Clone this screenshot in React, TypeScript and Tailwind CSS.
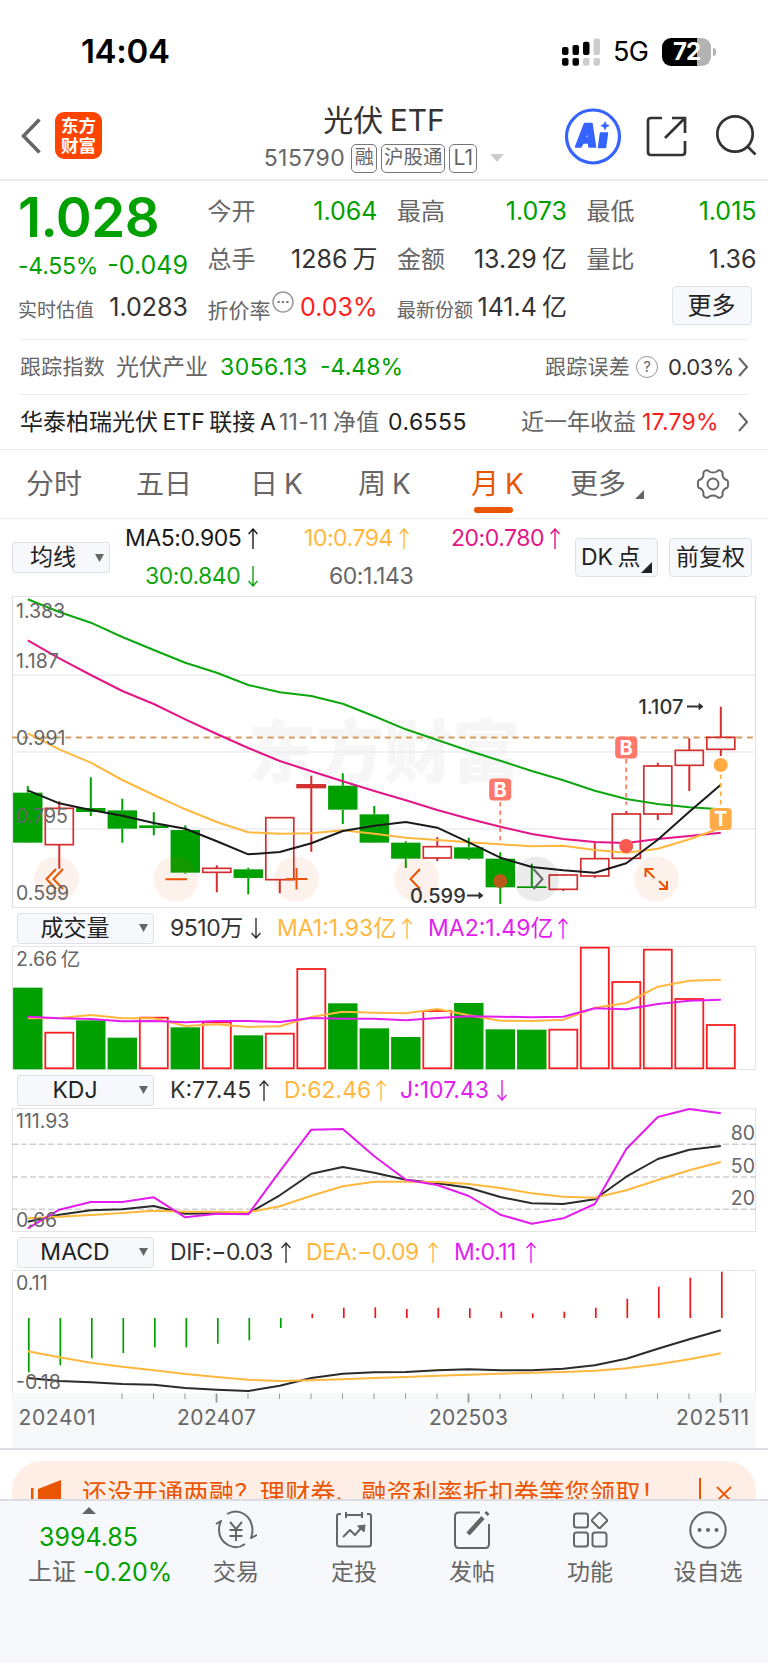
import type { ReactNode } from 'react';
import { clsx } from 'clsx';

const GREEN = '#00a000';
const RED = '#d32f2f';
const AMBER = '#ffb83d';
const MAGENTA = '#e41cf0';

// All series are stored in thirds of a pixel, one value per month
const cx = (i: number) => 27.8 + i * 31.5;

type Bar = [up: boolean, high: number, top: number, bottom: number, low: number];

const candles: Bar[] = [
  [false, 318, 338, 488, 489],
  [true, 364, 385, 494, 566],
  [false, 292, 384, 396, 408],
  [false, 356, 391, 446, 488],
  [false, 397, 436, 444, 466],
  [false, 436, 450, 578, 581],
  [true, 556, 565, 577, 637],
  [false, 563, 568, 594, 643],
  [true, 412, 413, 599, 640],
  [true, 287, 315, 322, 515],
  [false, 280, 317, 389, 432],
  [false, 378, 403, 488, 489],
  [false, 484, 488, 536, 564],
  [true, 471, 500, 534, 543],
  [false, 473, 502, 536, 540],
  [false, 517, 536, 622, 672],
  [false, 551, 619, 624, 624],
  [true, 583, 585, 628, 633],
  [true, 487, 536, 588, 594],
  [true, 393, 402, 535, 536],
  [true, 248, 258, 402, 420],
  [true, 175, 211, 256, 333],
  [true, 80, 172, 208, 228],
];

const ma5 = [331, 370, 390, 407, 429, 446, 484, 523, 516, 490, 453, 437, 426, 443, 487, 533, 561, 571, 578, 550, 479, 395, 314];
const ma10 = [160, 208, 248, 300, 345, 388, 426, 457, 461, 460, 451, 461, 473, 480, 487, 493, 499, 497, 510, 518, 506, 478, 444];
const ma20 = [-119, -65, -15, 33, 72, 118, 162, 204, 243, 274, 304, 333, 361, 390, 416, 440, 462, 477, 486, 489, 477, 468, 458];
const ma30 = [-242, -204, -172, -129, -90, -52, -22, 15, 37, 48, 71, 109, 148, 180, 212, 242, 273, 301, 332, 357, 372, 382, 388];

const volume = [144, 279, 242, 294, 234, 263, 248, 287, 282, 88, 191, 266, 292, 214, 190, 269, 270, 270, 24, 127, 30, 178, 256];
const volumeUp = [1, 4, 6, 8, 9, 13, 17, 18, 19, 20, 21, 22];
const vol1 = [236, 235, 226, 236, 236, 259, 254, 262, 260, 232, 216, 219, 221, 208, 227, 243, 244, 240, 204, 190, 141, 123, 120];
const vol2 = [231, 236, 238, 245, 244, 248, 244, 244, 247, 235, 237, 237, 242, 235, 230, 231, 233, 231, 206, 209, 193, 183, 180];

const kLine = [846, 825, 812, 809, 799, 822, 821, 821, 767, 702, 682, 699, 720, 731, 744, 772, 791, 793, 779, 711, 658, 630, 619];
const dLine = [836, 831, 826, 820, 813, 816, 816, 818, 800, 768, 740, 726, 726, 727, 733, 745, 761, 771, 774, 752, 721, 692, 667];
const jLine = [866, 810, 787, 787, 773, 833, 822, 824, 695, 570, 568, 650, 720, 736, 769, 825, 852, 836, 793, 628, 532, 508, 521];

const macd = [413, 392, 371, 355, 338, 338, 327, 317, 280, 237, 219, 218, 223, 219, 221, 231, 236, 231, 219, 192, 156, 129, 111];
const dif = [430, 439, 443, 448, 450, 460, 465, 469, 453, 430, 417, 413, 412, 407, 404, 407, 407, 402, 392, 372, 342, 314, 287];
const dea = [350, 368, 384, 396, 407, 418, 427, 435, 439, 437, 434, 430, 427, 423, 420, 417, 414, 412, 408, 401, 389, 374, 356];

function Line({ data, offset, color }: { data: number[]; offset: number; color: string }) {
  const points = data.map((v, i) => `${cx(i).toFixed(1)},${((v + offset) / 3).toFixed(1)}`).join(' ');
  return <polyline points={points} fill="none" stroke={color} strokeWidth={2} strokeLinejoin="round" />;
}

function Arrow({ down }: { down?: boolean }) {
  return (
    <svg width="10" height="21" viewBox="0 0 10 21" className={clsx('shrink-0', down && 'rotate-180')} fill="none" stroke="currentColor" strokeWidth="1.4">
      <path d="M5 21V1M0.6 6 5 1l4.4 5" />
    </svg>
  );
}

function Chevron() {
  return (
    <svg width="10" height="20" viewBox="0 0 10 20" fill="none" stroke="#666" strokeWidth="2">
      <path d="M1 1l8 9-8 9" />
    </svg>
  );
}

function Caret() {
  return (
    <svg width="9" height="8" viewBox="0 0 9 8" fill="#666">
      <path d="M0 0h9L4.5 8z" />
    </svg>
  );
}

function Quote({ label, value, className, small }: { label: ReactNode; value: string; className?: string; small?: boolean }) {
  return (
    <div className="flex h-12 items-center justify-between whitespace-nowrap">
      <span className={clsx('flex text-[#666]', small ? 'pt-1.5 text-[19px]' : 'text-2xl')}>{label}</span>
      <span className={clsx('text-[25px]', className)}>{value}</span>
    </div>
  );
}

function IndicatorBar({ name, items }: { name: string; items: { text: string; down?: boolean; className: string }[] }) {
  return (
    <div className="flex h-[38px] items-center pt-0.5 pl-[17px] text-[23px] whitespace-nowrap">
      <div className="flex h-[31px] w-[137px] shrink-0 items-center justify-between rounded-[3px] border border-[#dfe1e6] bg-[#f7f8fb] pr-[5px] text-[#222]">
        <span className="w-[114px] text-center">{name}</span>
        <Caret />
      </div>
      <div className="w-4" />
      {items.map((item) => (
        <div key={item.text} className={clsx('flex shrink-0 items-center justify-between', item.className)}>
          {item.text}
          <Arrow down={item.down} />
        </div>
      ))}
    </div>
  );
}

function Candle({ bar, i }: { bar: Bar; i: number }) {
  const [up, high, top, bottom, low] = bar;
  const y = (v: number) => (v + 252) / 3;
  const x = cx(i);
  const color = up ? RED : GREEN;
  return (
    <g stroke={color} strokeWidth={2}>
      <path d={`M${x} ${y(high)}V${y(top)}M${x} ${y(bottom)}V${y(low)}`} />
      {up ? (
        <rect x={x - 14} y={y(top)} width={28} height={y(bottom) - y(top)} fill="none" strokeWidth={1.7} />
      ) : (
        <rect x={x - 14.7} y={y(top)} width={29.4} height={y(bottom) - y(top)} fill={color} stroke="none" />
      )}
    </g>
  );
}

function Marker({ x, y, letter, color }: { x: number; y: number; letter: string; color: string }) {
  return (
    <g>
      <rect x={x - 11} y={y - 11} width="22" height="22" rx="4" fill={color} />
      <text x={x} y={y + 7} textAnchor="middle" fontSize="20" fontWeight="700" fill="#fff">{letter}</text>
    </g>
  );
}

function PriceChart() {
  return (
    <svg width="768" height="312" viewBox="0 0 768 312" className="block">
      <text x="248" y="181" fontSize="68" fontWeight="900" fill="#f6f6f6">东方财富</text>
      <path d="M12 79.2H756M12 156H756M12 233H756" stroke="#eaedf3" strokeWidth="1.6" />
      <rect x="12.5" y="0.5" width="743" height="311" fill="none" stroke="#dfe1e5" />
      <path d="M12 141.5H753" stroke="#d29b60" strokeWidth="2" strokeDasharray="6 4.65" />
      {candles.map((bar, i) => (
        <Candle key={i} bar={bar} i={i} />
      ))}
      <path d="M296.500 190.200h29.500" stroke={RED} strokeWidth="4" />
      <Line data={ma30} offset={252} color="#0ea60e" />
      <Line data={ma20} offset={252} color="#e31587" />
      <Line data={ma10} offset={252} color={AMBER} />
      <Line data={ma5} offset={252} color="#1a1a1a" />

      <g fill="#ea5504" fillOpacity="0.08">
        <circle cx="56.5" cy="283" r="22.5" />
        <circle cx="176" cy="283" r="22.5" />
        <circle cx="296.5" cy="283" r="22.5" />
        <circle cx="416.5" cy="283" r="22.5" />
        <circle cx="656.5" cy="283" r="22.5" />
        <circle cx="536.5" cy="283" r="22.5" fill="#000" />
      </g>
      <g fill="none" stroke="#ea5504" strokeWidth="2">
        <path d="M56 273 46.500 283l9.500 10M63 273l-9.500 10 9.500 10M165.500 283.300h21.500M286 283h21.500M296.500 272v21.500M420 273l-9.500 10 9.500 10" />
        <path d="M645.500 281V273h8M646 273.500l8.500 8.500M659 285l8 8M659 293h8V285" />
        <path d="M533.500 273l9 10-9 10" stroke="#666" />
      </g>

      <g fontSize="19.500" fill="#666">
        <text x="16" y="21.500">1.383</text>
        <text x="16" y="72">1.187</text>
        <text x="16" y="149">0.991</text>
        <text x="16" y="227">0.795</text>
        <text x="16" y="304">0.599</text>
      </g>
      <g fontSize="20" fontWeight="500" fill="#333">
        <text x="638.500" y="117.500">1.107</text>
        <text x="410" y="306.500">0.599</text>
      </g>
      <g stroke="#333" strokeWidth="2" fill="#333">
        <path d="M687 110.500h12M467 299.500h12" />
        <path d="M699 107.500l4 3-4 3zM479 296.500l4 3-4 3z" strokeWidth="1" />
      </g>

      <g stroke="#ff7560" strokeWidth="1.700" strokeDasharray="4.500 4">
        <path d="M500.200 206v43M626.200 163v46" />
        <path d="M720.700 170v42" stroke="#ffab40" />
      </g>
      <circle cx="500.200" cy="285" r="7" fill="#b95a1b" />
      <circle cx="626.200" cy="250" r="7" fill="#f85a50" />
      <circle cx="720.700" cy="169" r="7" fill="#ffab40" />
      <Marker x={500.2} y={193.5} letter="B" color="#ff7869" />
      <Marker x={626.2} y={151.5} letter="B" color="#ff7869" />
      <Marker x={720.7} y={223} letter="T" color="#ffab47" />
    </svg>
  );
}

function VolumeChart() {
  return (
    <svg width="768" height="124" viewBox="0 0 768 124" className="block">
      <rect x="12.5" y="0.5" width="743" height="123" fill="none" stroke="#e3e5e9" />
      {volume.map((v, i) => {
        const y = (v - 19) / 3;
        return volumeUp.includes(i) ? (
          <rect key={i} x={cx(i) - 14} y={y} width="28" height={122.3 - y} fill="none" stroke="#fa1e1e" strokeWidth="1.8" />
        ) : (
          <rect key={i} x={cx(i) - 14.7} y={y} width="29.4" height={123.3 - y} fill={GREEN} />
        );
      })}
      <Line data={vol1} offset={-19} color={AMBER} />
      <Line data={vol2} offset={-19} color={MAGENTA} />
      <text x="16" y="20" fontSize="19.5" fill="#666">2.66 亿</text>
    </svg>
  );
}

function KdjChart() {
  return (
    <svg width="768" height="124" viewBox="0 0 768 124" className="block">
      <rect x="12.5" y="0.5" width="743" height="123" fill="none" stroke="#e3e5e9" />
      <path d="M12 36.300H756M12 69H756M12 101.300H756" stroke="#d0d0d0" strokeWidth="1.600" strokeDasharray="6 3" />
      <Line data={kLine} offset={-505} color="#2b2b2b" />
      <Line data={dLine} offset={-505} color={AMBER} />
      <Line data={jLine} offset={-505} color={MAGENTA} />
      <g fontSize="19.500" fill="#666">
        <text x="16" y="20">111.93</text>
        <text x="16" y="119">0.66</text>
        <text x="755" y="32" textAnchor="end">80</text>
        <text x="755" y="64.500" textAnchor="end">50</text>
        <text x="755" y="97" textAnchor="end">20</text>
      </g>
    </svg>
  );
}

function MacdChart() {
  return (
    <svg width="768" height="178" viewBox="0 0 768 178" className="block">
      <rect x="12" y="123.5" width="744" height="54.5" fill="#f7f8fa" />
      <path d="M12.500 123.500V.5H755.500V123.500" fill="none" stroke="#e3e5e9" />
      {macd.map((v, i) => (
        <path key={i} d={`M${cx(i) + 1} 48V${(v - 106) / 3}`} stroke={i < 9 ? GREEN : '#f01414'} strokeWidth="1.7" />
      ))}
      <Line data={dif} offset={-106} color="#2b2b2b" />
      <Line data={dea} offset={-106} color={AMBER} />
      {macd.map((_, i) => {
        if (i < 3) return null;
        const major = i % 8 === 6;
        return <path key={i} d={`M${cx(i) - 0.3} 123.500v${major ? 9 : 5.5}`} stroke="#999" strokeWidth={major ? 1.8 : 1} />;
      })}
      <g fontSize="19.500" fill="#666">
        <text x="16" y="20">0.11</text>
        <text x="16" y="118.500">-0.18</text>
      </g>
      <g fontSize="21" fill="#666">
        <text x="18.500" y="154.500" textLength="77">202401</text>
        <text x="177" y="154.500" textLength="79">202407</text>
        <text x="429" y="154.500" textLength="79">202503</text>
        <text x="676" y="154.500" textLength="73">202511</text>
      </g>
    </svg>
  );
}

function StatusBar() {
  return (
    <div className="flex h-[100px] items-center justify-between pt-[3px] pr-[52px] pl-[81px]">
      <span className="text-[33px] font-semibold tracking-[-0.01em]">14:04</span>
      <div className="flex items-center">
        <svg width="39" height="28" viewBox="0 0 39 28">
          <rect x="0" y="9" width="6.500" height="8" rx="2" />
          <rect x="10.500" y="7" width="6.500" height="10" rx="2" />
          <rect x="21" y="3.700" width="6.500" height="13.300" rx="2" />
          <rect x="31.500" y="0.500" width="6.500" height="16.500" rx="2" fill="#ccc" />
          <rect x="0" y="20" width="6.500" height="7.700" rx="2" />
          <rect x="10.500" y="20" width="6.500" height="7.700" rx="2" />
          <rect x="21" y="20" width="6.500" height="7.700" rx="2" fill="#ccc" />
          <rect x="31.500" y="20" width="6.500" height="7.700" rx="2" fill="#ccc" />
        </svg>
        <span className="ml-3 w-[37px] pt-0.5 text-[27px] tracking-[-0.02em]">5G</span>
        <div className="ml-3 flex h-7 w-[49px] items-center justify-center rounded-[9px] bg-linear-to-r from-black from-[72%] to-[#b3b3b3] to-[72%] text-2xl font-bold tracking-[-0.04em] text-white">
          72
        </div>
        <div className="ml-0.5 h-2 w-[3px] rounded-r-full bg-[#b3b3b3]" />
      </div>
    </div>
  );
}

function TopBar() {
  return (
    <div className="flex h-[81px] border-b-2 border-[#ebebeb]">
      <div className="flex w-[246px] items-start pl-[21px]">
        <svg width="20" height="36" viewBox="0 0 20 36" className="mt-[18px]" fill="none" stroke="#666" strokeWidth="3.5">
          <path d="M18.500 1.500 2.500 18l16 16.500" />
        </svg>
        <div className="mt-3 ml-[14px] flex h-[47px] w-[47px] flex-col items-center justify-center rounded-[9px] bg-[#ff4400] text-[17.5px] leading-[20px] font-bold text-white">
          <span>东方</span>
          <span>财富</span>
        </div>
      </div>
      <div className="flex w-[276px] flex-col items-center whitespace-nowrap">
        <div className="h-[43px] text-[30px] leading-[40px] text-[#333]">光伏 ETF</div>
        <div className="flex h-[30px] items-center text-[#666]">
          <span className="mr-1.5 text-[23px] tracking-[0.02em]">515790</span>
          <span className="mr-1 flex h-[29px] w-[26px] items-center justify-center rounded-[5px] border border-[#777] text-[19px]">融</span>
          <span className="mr-1 flex h-[29px] w-16 items-center justify-center rounded-[5px] border border-[#777] text-[19.5px]">沪股通</span>
          <span className="mr-[13px] flex h-[29px] w-7 items-center justify-center rounded-[5px] border border-[#777] text-[21px]">L1</span>
          <svg width="14" height="8" viewBox="0 0 14 8" fill="#ccc">
            <path d="M0 0h14L7 8z" />
          </svg>
        </div>
      </div>
      <div className="flex flex-1 items-start pt-2 pl-[42px]">
        <svg width="58" height="58" viewBox="0 0 58 58" className="shrink-0">
          <circle cx="29" cy="28.500" r="26.500" fill="none" stroke="#3563ff" strokeWidth="3.200" />
          <path fillRule="evenodd" fill="#3563ff" stroke="#3563ff" strokeWidth="1.500" strokeLinejoin="round" d="M20.500 15.500h7.500l3.500 23.500h-6.500l-.5-4h-5.500l-2 4h-5.500zM23.800 23l-2.500 7h3zM36.500 25h7l-2 14.500h-7z" />
          <path fill="#3563ff" d="M41 13l1.500 3.300 3.300 1.500-3.300 1.500L41 22.500l-1.500-3.200-3.300-1.500 3.300-1.500z" />
        </svg>
        <svg width="42" height="42" viewBox="0 0 42 42" className="mt-2 ml-6 shrink-0" fill="none" stroke="#333" strokeWidth="2.700">
          <path d="M16 2H5Q2 2 2 5v31q0 3 3 3h31q3 0 3-3V25M26 2h13v15M19 22 39 2" />
        </svg>
        <svg width="42" height="42" viewBox="0 0 42 42" className="mt-[6px] ml-[27px] shrink-0" fill="none" stroke="#333" strokeWidth="2.700">
          <circle cx="20" cy="20" r="17.700" />
          <path d="M32 32l8.500 8.500" />
        </svg>
      </div>
    </div>
  );
}

function Quotes() {
  return (
    <div className="grid h-[158px] grid-cols-[170px_170px_170px_170px] gap-x-[19.500px] pt-[7px] pl-[18px]">
      <div className="whitespace-nowrap text-[#00a000]">
        <div className="h-[56px] text-[54.5px] leading-[58px] font-semibold tracking-[-0.01em]">1.028</div>
        <div className="flex h-[40px] items-center justify-between pt-1">
          <span className="text-[23px] tracking-[-0.01em]">-4.55%</span>
          <span className="text-[25px]">-0.049</span>
        </div>
        <Quote label="实时估值" value="1.0283" small className="text-[#333]" />
      </div>
      <div>
        <Quote label="今开" value="1.064" className="text-[#00a000]" />
        <Quote label="总手" value="1286 万" className="text-[#333]" />
        <Quote
          small
          label={
            <>
              <span className="text-[21px]">折价率</span>
              <svg width="22" height="22" viewBox="0 0 22 22" className="-mt-1 ml-px" fill="none" stroke="#999" strokeWidth="1.500">
                <circle cx="11" cy="11" r="10" />
                <path d="M5.500 11h2.200M9.900 11h2.200M14.300 11h2.200" stroke="#777" strokeWidth="2" />
              </svg>
            </>
          }
          value="0.03%"
          className="text-[#fa1e1e]"
        />
      </div>
      <div>
        <Quote label="最高" value="1.073" className="text-[#00a000]" />
        <Quote label="金额" value="13.29 亿" className="text-[#333]" />
        <Quote label="最新份额" value="141.4 亿" small className="text-[#333]" />
      </div>
      <div>
        <Quote label="最低" value="1.015" className="text-[#00a000]" />
        <Quote label="量比" value="1.36" className="text-[#333]" />
        <div className="mt-0.5 mr-[5px] ml-auto flex h-[39px] w-20 items-center justify-center rounded-[4px] border border-[#dfe1e6] bg-[#f7f8fb] text-2xl text-[#222]">
          更多
        </div>
      </div>
    </div>
  );
}

function InfoRows() {
  return (
    <div className="border-b border-[#ebebeb] text-[23px] whitespace-nowrap">
      <div className="mx-5 flex h-[55px] items-center border-t border-[#ebebeb] text-[#666]">
        <span className="w-24 text-[21px] tracking-[0.01em]">跟踪指数</span>
        <span className="w-26">光伏产业</span>
        <span className="w-[100px] tracking-[0.02em] text-[#00a000]">3056.13</span>
        <span className="text-[#00a000]">-4.48%</span>
        <span className="ml-auto w-[91px] text-[21px] tracking-[0.01em]">跟踪误差</span>
        <span className="flex h-[22px] w-[22px] items-center justify-center rounded-full border border-[#999] text-[15px]">?</span>
        <span className="ml-[10px] w-[70px] text-[22px] tracking-[-0.02em] text-[#333]">0.03%</span>
        <Chevron />
      </div>
      <div className="mx-5 flex h-[55px] items-center border-t border-[#ebebeb] text-[#666]">
        <span className="w-[259px] text-[#222]">华泰柏瑞光伏 ETF 联接 A</span>
        <span className="w-[109px] tracking-[0.01em]">11-11 净值</span>
        <span className="tracking-[0.02em] text-[#222]">0.6555</span>
        <span className="ml-auto w-[121px]">近一年收益</span>
        <span className="w-[96px] tracking-[0.01em] text-[#fa1e1e]">17.79%</span>
        <Chevron />
      </div>
    </div>
  );
}

const tabs = [
  { name: '分时', className: 'w-[110px]' },
  { name: '五日', className: 'w-[114px]' },
  { name: '日 K', className: 'w-[108px]' },
  { name: '周 K', className: 'w-[113px]' },
  { name: '月 K', className: 'w-[99px] text-[#ea5504]' },
  { name: '更多', className: 'w-[65px]' },
];

function Tabs() {
  return (
    <div className="flex h-[69px] items-center border-b border-[#ededed] pl-[26px] text-[28px] whitespace-nowrap text-[#666]">
      {tabs.map((tab) => (
        <div key={tab.name} className={clsx('relative', tab.className)}>
          {tab.name}
          {tab.name === '月 K' && <div className="absolute top-[44px] left-[3px] h-1.5 w-[39px] rounded-full bg-[#ea5504]" />}
        </div>
      ))}
      <svg width="9" height="9" viewBox="0 0 9 9" className="mt-5" fill="#666">
        <path d="M9 0v9H0z" />
      </svg>
      <svg width="34" height="34" viewBox="0 0 34 34" className="ml-[52px]" fill="none" stroke="#666" strokeWidth="1.900" strokeLinejoin="round">
        <path d="M9.500 3.500Q12 2.500 13 4.500Q17 6.500 21 4.500Q22 2.500 24.500 3.500Q27.500 5 26.500 8Q27.500 12.500 31 13Q32.500 14 32 17Q32.500 20 31 21Q27.500 21.500 26.500 26Q27.500 29 24.500 30.500Q22 31.500 21 29.500Q17 27.500 13 29.500Q12 31.500 9.500 30.500Q6.500 29 7.500 26Q6.500 21.500 3 21Q1.500 20 2 17Q1.500 14 3 13Q6.500 12.500 7.500 8Q6.500 5 9.500 3.500Z" />
        <circle cx="17" cy="17" r="5.500" />
      </svg>
    </div>
  );
}

function MaLegend() {
  return (
    <div className="flex h-[77px] text-[23px] whitespace-nowrap">
      <div className="mt-[23px] ml-3 flex h-[31px] w-[98px] items-center justify-between rounded-[3px] border border-[#dfe1e6] bg-[#f7f8fb] pr-[5px] pl-[17px] text-[#222]">
        均线
        <Caret />
      </div>
      <div className="w-[465px] tracking-[-0.02em]">
        <div className="flex h-[39px] items-center">
          <div className="ml-[15px] flex w-[133px] items-center justify-between text-[#1a1a1a]">MA5:0.905<Arrow /></div>
          <div className="ml-[46px] flex w-[105px] items-center justify-between text-[#ffb83d]">10:0.794<Arrow /></div>
          <div className="ml-[42px] flex w-[109px] items-center justify-between text-[#e31587]">20:0.780<Arrow /></div>
        </div>
        <div className="flex h-[37px] items-center">
          <div className="ml-[35px] flex w-[113px] items-center justify-between text-[#0ea60e]">30:0.840<Arrow down /></div>
          <div className="ml-[71px] text-[#666]">60:1.143</div>
        </div>
      </div>
      <div className="relative mt-[19px] flex h-[39px] w-[83px] items-center rounded-[4px] border border-[#dfe1e6] bg-[#f7f8fb] pl-[5px] text-[#222]">
        DK 点
        <svg width="11" height="11" viewBox="0 0 11 11" className="absolute right-[5px] bottom-[3px]" fill="#222">
          <path d="M11 0v11H0z" />
        </svg>
      </div>
      <div className="mt-[19px] ml-[11px] flex h-[39px] w-[83px] items-center justify-center rounded-[4px] border border-[#dfe1e6] bg-[#f7f8fb] text-[#222]">
        前复权
      </div>
    </div>
  );
}

function Banner() {
  return (
    <div className="h-[51px] overflow-hidden border-t-2 border-[#dcdde2] px-3 pt-[11px]">
      <div className="flex h-[65px] items-center rounded-[30px] bg-[#feeee5] pl-[19px] whitespace-nowrap text-[#ea5504]">
        <svg width="31" height="28" viewBox="0 0 31 28" className="shrink-0" fill="currentColor">
          <path d="M0 8h2.500v18H0zM7 9 30 0v28L7 24z" />
        </svg>
        <span className="ml-5 w-[617px] shrink-0 text-[25px] tracking-[0.4px]">还没开通两融？理财券、融资利率折扣券等您领取！</span>
        <div className="h-[31px] w-0.5 shrink-0 bg-current" />
        <svg width="16" height="16" viewBox="0 0 16 16" className="ml-[15px] shrink-0" fill="none" stroke="currentColor" strokeWidth="1.800">
          <path d="M1 1l14 14M15 1 1 15" />
        </svg>
      </div>
    </div>
  );
}

const actions: { name: string; icon: ReactNode }[] = [
  {
    name: '交易',
    icon: (
      <>
        <path d="M12 4Q21 -1 29 4Q37 9 37.500 20Q37.500 24 36 28l6-3M30 34Q22 40 13 35Q4 30 4 20Q4 15 6 11l-5 3" />
        <path d="M15 12l6 7 6-7M21 19v12M14.500 20h13M14.500 26h13" />
      </>
    ),
  },
  {
    name: '定投',
    icon: (
      <>
        <path d="M8 4H6Q4 4 4 6v28q0 2.500 2.500 2.500h29Q38 36.500 38 34V6q0-2-2-2h-2M13 5h16M13 2v6M29 2v6" />
        <path d="M10 27l7-7 5 5 7-8" />
        <path d="M24.500 16l7.500-1-1 7z" fill="#666" strokeWidth="1" />
      </>
    ),
  },
  {
    name: '发帖',
    icon: (
      <>
        <path d="M29 2.500H8q-4 0-4 4V34q0 4 4 4h26q4 0 4-4V14" />
        <path d="M17 24 32 7.500M35 4.500l2-2" strokeWidth="4.500" />
      </>
    ),
  },
  {
    name: '功能',
    icon: (
      <>
        <rect x="5" y="3.500" width="14" height="14" rx="2.500" />
        <rect x="5" y="22.500" width="14" height="14" rx="2.500" />
        <rect x="23.500" y="22.500" width="14" height="14" rx="2.500" />
        <rect x="24.700" y="4.700" width="11.500" height="11.500" rx="1.500" transform="rotate(45 30.500 10.500)" />
      </>
    ),
  },
  {
    name: '设自选',
    icon: (
      <>
        <circle cx="21" cy="20" r="17.700" />
        <path d="M12.500 20h.1M21 20h.1M29.500 20h.1" strokeWidth="4" strokeLinecap="round" />
      </>
    ),
  },
];

function BottomBar() {
  return (
    <div className="flex h-[164px] border-t-2 border-[#dcdde2] bg-[#f7f8fb] text-[#666]">
      <div className="flex w-[177px] flex-col items-center whitespace-nowrap">
        <svg width="14" height="7" viewBox="0 0 14 7" className="mt-1.5" fill="#666">
          <path d="M0 7h14L7 0z" />
        </svg>
        <div className="mt-[5px] h-9 text-[25px] leading-9 text-[#00a000]">3994.85</div>
        <div className="flex w-[143px] items-center justify-between self-start pl-7 text-2xl leading-[34px]">
          上证<span className="ml-[7px] text-[25px] text-[#00a000]">-0.20%</span>
        </div>
      </div>
      {actions.map((action) => (
        <div key={action.name} className="flex w-[118px] flex-col items-center pt-[9px]">
          <svg width="42" height="40" viewBox="0 0 42 40" fill="none" stroke="#666" strokeWidth="2" strokeLinejoin="round">
            {action.icon}
          </svg>
          <span className="mt-[5px] text-[23px] leading-[34px] whitespace-nowrap">{action.name}</span>
        </div>
      ))}
    </div>
  );
}

export default function App() {
  return (
    <div className="h-[1663px] w-[768px] overflow-hidden bg-white font-[Inter,'Noto_Sans_CJK_SC',sans-serif] text-black [word-spacing:-0.12em]">
      <StatusBar />
      <TopBar />
      <Quotes />
      <InfoRows />
      <Tabs />
      <MaLegend />
      <PriceChart />
      <IndicatorBar
        name="成交量"
        items={[
          { text: '9510万', down: true, className: 'w-[91px] tracking-[-0.02em] text-[#333]' },
          { text: 'MA1:1.93亿', className: 'ml-4 w-[135px] text-[#ffb83d]' },
          { text: 'MA2:1.49亿', className: 'ml-4 w-[140px] text-[#e41cf0]' },
        ]}
      />
      <VolumeChart />
      <IndicatorBar
        name="KDJ"
        items={[
          { text: 'K:77.45', className: 'w-[99px] text-[#333]' },
          { text: 'D:62.46', className: 'ml-[15px] w-[102px] text-[#ffb83d]' },
          { text: 'J:107.43', down: true, className: 'ml-[14px] w-[107px] text-[#e41cf0]' },
        ]}
      />
      <KdjChart />
      <IndicatorBar
        name="MACD"
        items={[
          { text: 'DIF:−0.03', className: 'w-[121px] tracking-[-0.02em] text-[#333]' },
          { text: 'DEA:−0.09', className: 'ml-[15px] w-[132px] tracking-[-0.02em] text-[#ffb83d]' },
          { text: 'M:0.11', className: 'ml-4 w-[82px] tracking-[-0.02em] text-[#e41cf0]' },
        ]}
      />
      <MacdChart />
      <Banner />
      <BottomBar />
    </div>
  );
}
